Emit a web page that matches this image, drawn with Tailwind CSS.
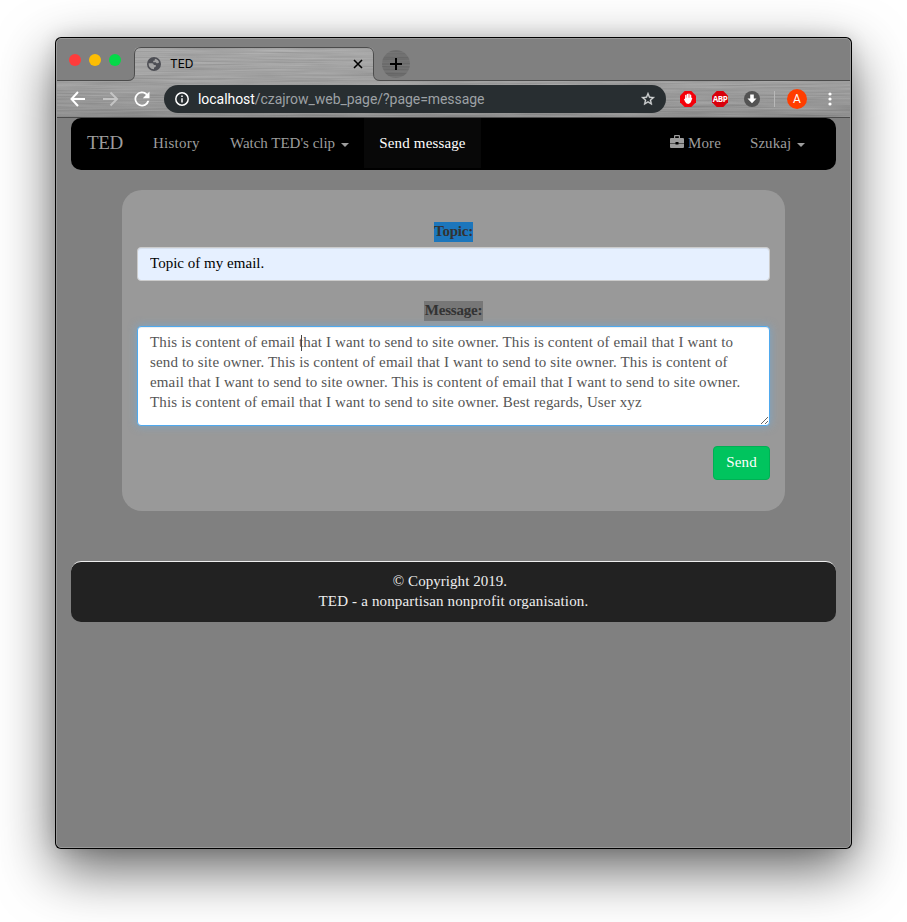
<!DOCTYPE html>
<html lang="en">
<head>
<meta charset="utf-8">
<title>TED</title>
<script src="https://cdn.jsdelivr.net/npm/@tailwindcss/browser@4"></script>
</head>
<body class="bg-white w-[907px] h-[922px] overflow-hidden pt-[37px] pl-[55px] font-['Liberation_Serif',serif] text-[15px] leading-5">
<div class="relative w-[797px] h-[812px] rounded-[6px] bg-black p-px shadow-[0_20px_56px_rgba(0,0,0,0.62),0_0_18px_rgba(0,0,0,0.12)]">
<div class="relative isolate h-full rounded-[5px] bg-[#808080] overflow-hidden border border-[#999] flex flex-col">

  <!-- brushed metal behind the active tab and the toolbar -->
  <svg class="absolute -left-px -top-px -z-10" width="795" height="80" viewBox="56 38 795 80" fill="none">
    <defs>
      <filter id="metal" x="0" y="0" width="100%" height="100%" color-interpolation-filters="sRGB">
        <feTurbulence type="fractalNoise" baseFrequency="0.012 0.6" numOctaves="3" seed="4"/>
        <feColorMatrix values="0.17 0 0 0 0.515  0.17 0 0 0 0.515  0.17 0 0 0 0.515  0 0 0 0 1"/>
      </filter>
      <clipPath id="shape"><path d="M56 81H128Q134 81 134 75V53Q134 47 140 47H368Q374 47 374 53V75Q374 81 380 81H851V118H56Z"/></clipPath>
      <clipPath id="plus"><circle cx="396" cy="64" r="14"/></clipPath>
      <linearGradient id="shade" x1="0" y1="0" x2="0" y2="1"><stop offset="0" stop-color="#fff" stop-opacity=".14"/><stop offset=".5" stop-color="#fff" stop-opacity=".06"/><stop offset="1" stop-color="#000" stop-opacity=".07"/></linearGradient>
    </defs>
    <g clip-path="url(#shape)"><rect x="56" y="38" width="795" height="80" filter="url(#metal)"/><rect x="56" y="47" width="795" height="71" fill="url(#shade)"/></g>
    <g clip-path="url(#plus)"><rect x="380" y="48" width="32" height="32" filter="url(#metal)"/><rect x="380" y="48" width="32" height="32" fill="#000" fill-opacity=".27"/></g>
    <path d="M56 80.5H128Q134.5 80.500 134.500 74V54Q134.500 47.500 141 47.500H367Q373.500 47.500 373.500 54V74Q373.500 80.500 380 80.500H851M56 117.500H851" stroke="#4c4c4c"/>
  </svg>

  <div class="h-[42px] shrink-0 flex items-start">
    <div class="flex gap-2 pl-3 pt-[15px] w-[89px]">
      <span class="size-3 rounded-full bg-[#ff3b3b]"></span><span class="size-3 rounded-full bg-[#fdbe04]"></span><span class="size-3 rounded-full bg-[#05d948]"></span>
    </div>
    <div class="flex items-center h-[34px] mt-2 w-[225px] text-black font-['Inter',sans-serif] text-[12px]">
      <svg width="16" height="16" viewBox="0 0 16 16"><circle cx="8" cy="8" r="7" fill="#4d4e54"/><path d="M2.600 7.200h3.600q1.500.2 1.600 1.800h2v1.500q-.6 1-1.800 1v1.800q-3-.1-4.500-2.400-1.100-1.700-.9-3.700zM9 2.700q1.700.3 2.900 1.500.8.800 1.200 2-1 1.500-2.500 1l-.8-1H7.200V4.700h1.300z" fill="#a2a2a2"/></svg>
      <span class="pl-2 flex-1 tracking-[-0.100px]">TED</span>
      <svg class="mr-[8px]" width="10" height="10" viewBox="0 0 10 10" stroke="#000" stroke-width="1.600"><path d="M1 1l8 8M9 1L1 9"/></svg>
    </div>
    <svg class="ml-[18px] mt-[18px]" width="14" height="14" viewBox="0 0 14 14" stroke="#000" stroke-width="2"><path d="M7 1v12M1 7h12"/></svg>
  </div>

  <div class="h-[37px] pb-[2px] shrink-0 flex items-center pl-[12px] font-['Inter',sans-serif]">
    <svg width="18" height="18" viewBox="0 0 18 18" fill="none" stroke="#fff" stroke-width="2"><path d="M16 9H3M9 2L2.500 9 9 16"/></svg>
    <svg class="ml-[15px]" width="18" height="18" viewBox="0 0 18 18" fill="none" stroke="#c4c4c4" stroke-width="2"><path d="M1 9h13M8.500 2.500L15 9l-6.500 6.500"/></svg>
    <svg class="ml-[12px]" width="20" height="20" viewBox="0 0 24 24" fill="#fff"><path d="M18.400 5.600A9 9 0 1 0 20.800 14h-2.400A6.800 6.800 0 1 1 12 5.200c1.800 0 3.400.8 4.700 2L13 11h8V3z"/></svg>
    <div class="ml-[12px] w-[502px] h-7 rounded-full bg-[#282e31] flex items-center pl-[11px] pr-[10px]">
      <svg width="14" height="14" viewBox="0 0 14 14" fill="none" stroke="#fff" stroke-width="1.500"><circle cx="7" cy="7" r="6.200"/><path d="M7 6.200v4.300M7 3.400v1.500"/></svg>
      <span class="pl-[9px] flex-1 font-['Roboto',sans-serif] text-[14px] tracking-[-0.050px] text-[#9da1a5] whitespace-nowrap"><span class="text-white">localhost</span>/czajrow_web_page/?page=message</span>
      <svg width="16" height="16" viewBox="0 0 24 24" fill="#d5d7d8" stroke="#d5d7d8" stroke-width=".5"><path d="M22 9.240l-7.190-.62L12 2 9.190 8.630 2 9.240l5.460 4.730L5.820 21 12 17.270 18.180 21l-1.630-7.030zM12 15.400l-3.760 2.270 1-4.280-3.320-2.880 4.380-.38L12 6.100l1.710 4.040 4.380.38-3.320 2.880 1 4.280z"/></svg>
    </div>
    <svg class="ml-[14px]" width="16" height="16" viewBox="0 0 16 16"><path d="M4.700 0h6.600L16 4.700v6.600L11.300 16H4.700L0 11.300V4.700z" fill="#f40009"/><path d="M5.800 8V4.400M7.400 7V3.300M9 7V3.100M10.600 7.500V4.200" stroke="#fff" stroke-width="1.300" stroke-linecap="round"/><path d="M5.100 6.700h6.200v-.3l1 .8-1.100 3q-.7 2.700-3 2.700-2.300 0-3.200-2.300L3.900 8.100l.6-.4.600.5z" fill="#fff"/></svg>
    <div class="relative ml-4 size-4">
      <svg width="16" height="16" viewBox="0 0 16 16"><path d="M4.700 0h6.600L16 4.700v6.600L11.300 16H4.700L0 11.300V4.700z" fill="#d9000b"/></svg>
      <span class="absolute -inset-x-1 inset-y-0 text-center leading-4 text-white text-[8px] tracking-[-0.500px] font-bold font-['Open_Sans',sans-serif]">ABP</span>
    </div>
    <svg class="ml-4" width="16" height="16" viewBox="0 0 16 16"><circle cx="8" cy="8" r="8" fill="#535353"/><path d="M6.200 3.500h3.600v4h2.700L8 12.300 3.500 7.500h2.700z" fill="#fff"/></svg>
    <span class="ml-[14px] w-px h-4 bg-[#b8b8b8]"></span>
    <span class="ml-[12px] size-5 rounded-full bg-[#ff3d00] text-white text-[12px] text-center leading-[21px] font-['Roboto',sans-serif]">A</span>
    <svg class="ml-[21px]" width="4" height="14" viewBox="0 0 4 14" fill="#fff"><circle cx="2" cy="2" r="1.600"/><circle cx="2" cy="7" r="1.600"/><circle cx="2" cy="12" r="1.600"/></svg>
  </div>

  <div class="px-[14px]">
    <nav class="h-[52px] w-[765px] rounded-[10px] bg-black text-[#9d9d9d] flex items-center whitespace-nowrap overflow-hidden pb-[2px]">
      <span class="ml-4 w-[66px] text-[19px] tracking-[-0.300px]">TED</span>
      <span class="w-[77px] tracking-[0.250px]">History</span>
      <span class="w-[134px] flex items-center"><span class="tracking-[-0.020px]">Watch TED's clip</span><span class="ml-[6px] mt-1 border-x-4 border-t-4 border-x-transparent border-t-[#9d9d9d]"></span></span>
      <span class="w-[117px] h-[50px] bg-[#080808] text-white text-center leading-[50px] tracking-[0.150px]">Send message</span>
      <span class="ml-[189px] w-[80px] flex items-center gap-[4px]">
        <svg class="mb-1" width="14" height="13" viewBox="0 0 14 13" fill="#9d9d9d"><path fill-rule="evenodd" d="M4 3V1Q4 0 5 0h4q1 0 1 1v2h3q1 0 1 1v4H8.500V7h-3v1H0V4q0-1 1-1zM5.200 1.200V3h3.600V1.200zM0 8.600h5.500v1h3v-1H14V12q0 1-1 1H1q-1 0-1-1z"/></svg>
        <span class="tracking-[0.100px]">More</span></span>
      <span class="flex items-center"><span class="tracking-[0.050px]">Szukaj</span><span class="ml-[6px] mt-1 border-x-4 border-t-4 border-x-transparent border-t-[#9d9d9d]"></span></span>
    </nav>

    <form class="mt-5 ml-[51px] w-[663px] h-[321px] rounded-[20px] bg-[#999] px-[15px] pt-8 flex flex-col items-center">
      <label class="bg-[#1c76bc] text-[#333] font-bold w-[39px] h-5 leading-[18px] text-center tracking-[-0.200px] whitespace-nowrap">Topic:</label>
      <input type="text" value="Topic of my email." class="mt-[5px] w-full h-[34px] rounded-[4px] border border-[#ccc] bg-[#e6f0ff] px-3 pb-[2px] text-black shadow-[inset_0_1px_1px_rgba(0,0,0,0.075)] tracking-[0.020px]">
      <label class="mt-5 bg-[#777] text-[#333] font-bold w-[59px] h-5 leading-[18px] text-center tracking-[-0.200px] whitespace-nowrap">Message:</label>
      <div class="relative mt-[5px] w-full h-[100px]">
        <textarea class="w-full h-full rounded-[4px] border border-[#4fa9ee] bg-white px-3 pt-[5px] pb-[6px] text-[#555] outline-none resize overflow-hidden whitespace-pre shadow-[inset_0_1px_1px_rgba(0,0,0,0.075),0_0_8px_rgba(102,175,233,0.6)] tracking-[0.145px]">This is content of email that I want to send to site owner. This is content of email that I want to
send to site owner. This is content of email that I want to send to site owner. This is content of
email that I want to send to site owner. This is content of email that I want to send to site owner.
This is content of email that I want to send to site owner. Best regards, User xyz</textarea>
        <span class="absolute left-[164px] top-[9px] w-px h-4 bg-[#444]"></span>
      </div>
      <button type="button" class="mt-5 self-end w-[57px] h-[34px] rounded-[4px] border border-[#00b054] bg-[#00c45e] text-white pb-[2px] tracking-[0.150px]">Send</button>
    </form>

    <footer class="mt-[50px] w-[765px] h-[61px] rounded-[10px] border-t border-[#eee] bg-[#222] text-[#eee] text-center pt-[9px] tracking-[0.160px]">
      <p class="pr-[7px] tracking-[0.050px]">© Copyright 2019.</p>
      <p>TED - a nonpartisan nonprofit organisation.</p>
    </footer>
  </div>
</div>
</div>
</body>
</html>
